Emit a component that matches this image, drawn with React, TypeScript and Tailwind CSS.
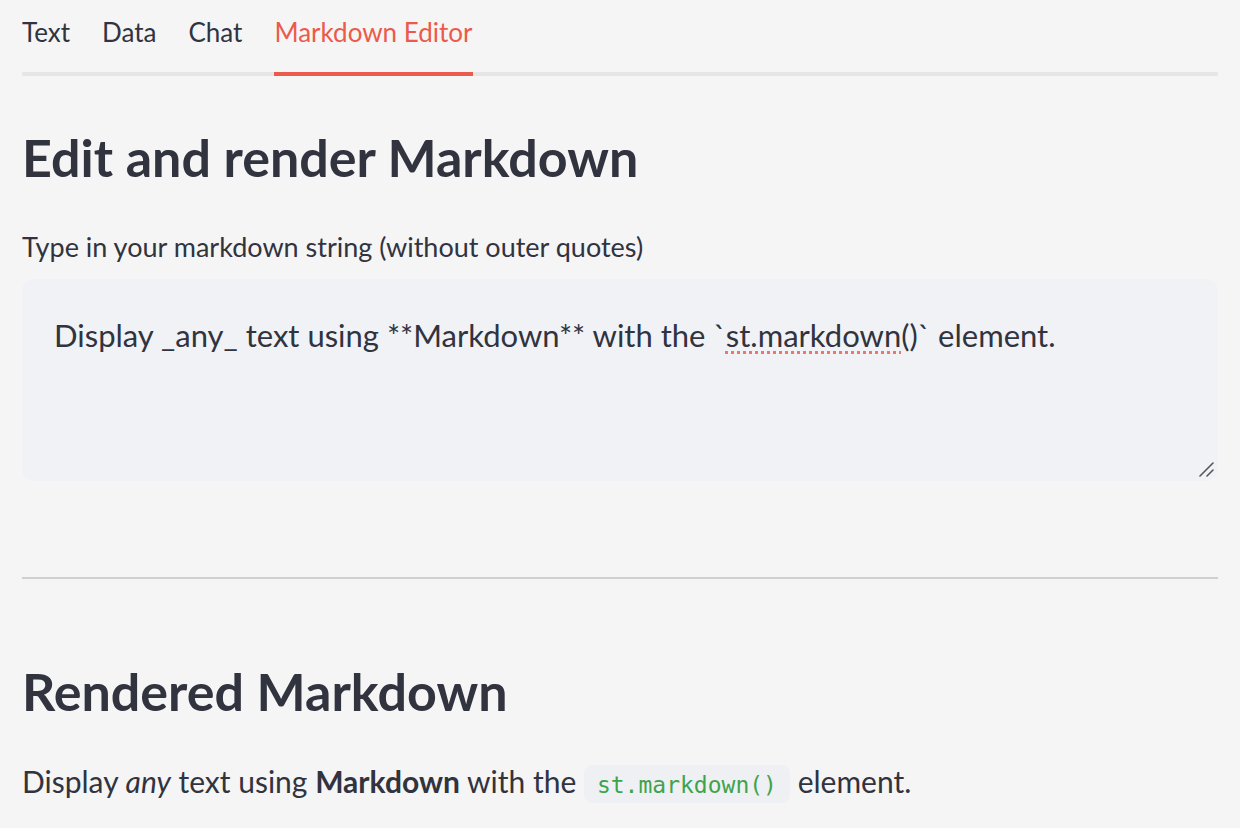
import React from "react";

const tabs = ["Text", "Data", "Chat", "Markdown Editor"];

function ResizeHandle() {
  return (
    <svg
      className="absolute right-[4px] bottom-[3px]"
      width="16"
      height="16"
      viewBox="0 0 16 16"
      aria-hidden="true"
    >
      <line x1="2" y1="14" x2="15" y2="1" stroke="#555" strokeWidth="1.6" strokeLinecap="round" />
      <line x1="9" y1="14" x2="15" y2="8" stroke="#555" strokeWidth="1.6" strokeLinecap="round" />
    </svg>
  );
}

export default function App() {
  return (
    <div className="min-h-[828px] w-full bg-[#f5f5f5] font-['Lato',sans-serif] text-[#31333f]">
      <div className="px-[22px]">
        {/* Tabs */}
        <div className="flex gap-[32px] shadow-[inset_0_-4px_0_#e6e6e6]">
          {tabs.map((t) => {
            const active = t === "Markdown Editor";
            return (
              <div
                key={t}
                className={
                  active
                    ? "pt-[12px] pb-[20px] text-[26px] leading-[40px] text-[#ec5a4b] border-b-4 border-[#ec5a4b]"
                    : "pt-[12px] pb-[20px] text-[26px] leading-[40px] text-[#31333f] border-b-4 border-transparent"
                }
              >
                {t}
              </div>
            );
          })}
        </div>

        {/* Heading */}
        <h2 className="mt-[49px] text-[52px] leading-[64px] font-bold">
          Edit and render Markdown
        </h2>

        {/* Label */}
        <div className="mt-[40px] text-[27px] leading-[36px]">
          Type in your markdown string (without outer quotes)
        </div>

        {/* Textarea */}
        <div className="relative mt-[14px] h-[202px] rounded-[12px] bg-[#f0f2f6] pl-[32px] pt-[34px] text-[31px] leading-[44px]">
          Display _any_ text using **Markdown** with the `
          <span className="underline decoration-dotted decoration-[#f0766a] decoration-[3px] underline-offset-[4px]">
            st.markdown
          </span>
          ()` element.
          <ResizeHandle />
        </div>

        {/* Divider */}
        <div className="mt-[96px] h-[2px] bg-[#d0d0d2]" />

        {/* Rendered heading */}
        <h2 className="mt-[80px] text-[52px] leading-[64px] font-bold">
          Rendered Markdown
        </h2>

        {/* Rendered paragraph */}
        <p className="mt-[36px] text-[30px] leading-[44px]">
          Display <em>any</em> text using <strong className="font-bold">Markdown</strong> with the{" "}
          <code className="rounded-[8px] bg-[#eff0f3] px-[13px] pt-[7px] pb-[5px] font-['DejaVu_Sans_Mono',monospace] text-[23px] text-[#3fa34d]">
            st.markdown()
          </code>{" "}
          element.
        </p>
      </div>
    </div>
  );
}
